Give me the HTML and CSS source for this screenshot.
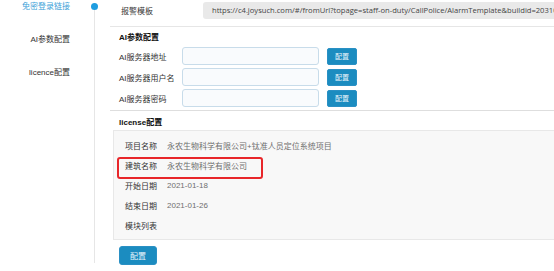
FILE: index.html
```html
<!DOCTYPE html>
<html>
	<head>
		<title>配置</title>
		<meta charset="utf-8">
		<link rel="stylesheet" href="styles.css">
	</head>
	<body>
		<div class="page">
			<div class="nav">
				<ul>
					<li class="active">免密登录链接</li>
					<li>AI参数配置</li>
					<li>licence配置</li>
				</ul>
			</div>

			<div class="main">
				<div class="template-row">
					<span class="template-label">报警模板</span>
					<div class="url-box">https://c4.joysuch.com/#/fromUrl?topage=staff-on-duty/CallPolice/AlarmTemplate&amp;buildid=203106</div>
				</div>

				<div class="section ai">
					<h3>AI参数配置</h3>
					<div class="field">
						<label>AI服务器地址</label>
						<input type="text">
						<button class="btn">配置</button>
					</div>
					<div class="field">
						<label>AI服务器用户名</label>
						<input type="text">
						<button class="btn">配置</button>
					</div>
					<div class="field">
						<label>AI服务器密码</label>
						<input type="text">
						<button class="btn">配置</button>
					</div>
				</div>

				<div class="section license">
					<h3>license配置</h3>
					<div class="info-box">
						<div class="info-row"><span class="key">项目名称</span><span class="val">永农生物科学有限公司+钛准人员定位系统项目</span></div>
						<div class="info-row marked"><span class="key">建筑名称</span><span class="val">永农生物科学有限公司</span><span class="mark"></span></div>
						<div class="info-row"><span class="key">开始日期</span><span class="val">2021-01-18</span></div>
						<div class="info-row"><span class="key">结束日期</span><span class="val">2021-01-26</span></div>
						<div class="info-row"><span class="key">模块列表</span><span class="val"></span></div>
					</div>
					<button class="btn btn-big">配置</button>
				</div>
			</div>
		</div>
	</body>
</html>
```

FILE: styles.css
```css
html,body {
	margin: 0;
	padding: 0;
	background-color: #fff;
}

body {
	width: 554px;
	height: 271px;
	overflow: hidden;
	font-family: 'Liberation Sans', 'Noto Sans CJK SC', sans-serif;
	font-size: 8px;
	color: #333;
}

.page {
	display: flex;
	align-items: flex-start;
}

/* left timeline nav */
.nav {
	position: relative;
	flex: none;
	width: 94px;
	height: 257px;
	margin-top: 6px;
	border-right: 1px solid #e6e6e6;
}

.nav::after {
	content: '';
	position: absolute;
	top: -3px;
	right: -4px;
	width: 7px;
	height: 7px;
	border-radius: 50%;
	background-color: #1e9de0;
}

.nav ul {
	list-style: none;
	margin: -6px 0 0;
	padding: 0 24px 0 0;
	text-align: right;
}

.nav li {
	line-height: 14px;
	margin-bottom: 19px;
	color: #333;
}

.nav li.active {
	color: #3d9fd8;
}

/* content */
.main {
	flex: none;
	width: 600px;
	margin-left: 15px;
}

.template-row {
	display: flex;
	align-items: center;
	padding: 2px 0 7px 11px;
	border-bottom: 1px solid #e6e6e6;
}

.template-label {
	width: 82px;
	flex: none;
	color: #333;
}

.url-box {
	flex: 1;
	height: 17px;
	line-height: 17px;
	padding-left: 9px;
	border-radius: 3px;
	background-color: #e9e9e9;
	font-family: 'Open Sans', sans-serif;
	font-size: 7.6px;
	color: #444;
	white-space: nowrap;
	overflow: hidden;
}

.section h3 {
	margin: 0;
	font-size: 8px;
	line-height: 14px;
	font-weight: bold;
	color: #111;
}

.ai {
	padding: 4px 0 3px 9px;
	border-bottom: 1px solid #dedede;
}

.ai h3 {
	margin-bottom: 2px;
}

.field {
	display: flex;
	align-items: center;
	height: 18px;
	margin-bottom: 3px;
}

.field:last-child {
	margin-bottom: 0;
}

.field label {
	width: 63px;
	flex: none;
	color: #333;
}

.field input {
	box-sizing: border-box;
	width: 137px;
	height: 18px;
	margin: 0 8px 0 0;
	border: 1px solid #c8dcea;
	border-radius: 3px;
	background-color: #f9fbfd;
}

.btn {
	box-sizing: border-box;
	width: 30px;
	height: 17px;
	padding: 0;
	border: 1px solid #2a90c4;
	border-radius: 2px;
	background-color: #1b8cc0;
	font-family: 'Noto Sans CJK SC', sans-serif;
	font-size: 7px;
	color: #e8f4fb;
}

.license {
	padding: 5px 0 0 9px;
}

.info-box {
	margin-left: -6px;
	padding: 4px 0 4px 11px;
	background-color: #f8f8f8;
	border: 1px solid #e8e8e8;
	border-right: none;
}

.info-row {
	position: relative;
	display: flex;
	align-items: center;
	height: 20px;
}

.key {
	width: 42px;
	flex: none;
	color: #333;
}

.val {
	color: #6f6f6f;
}

.mark {
	position: absolute;
	top: 2px;
	left: -8px;
	width: 142px;
	height: 18px;
	border: 2px solid #e8262a;
	border-radius: 3px;
}

.btn-big {
	width: 38px;
	height: 19px;
	margin-top: 6px;
	border-radius: 3px;
	font-size: 8px;
}
```
